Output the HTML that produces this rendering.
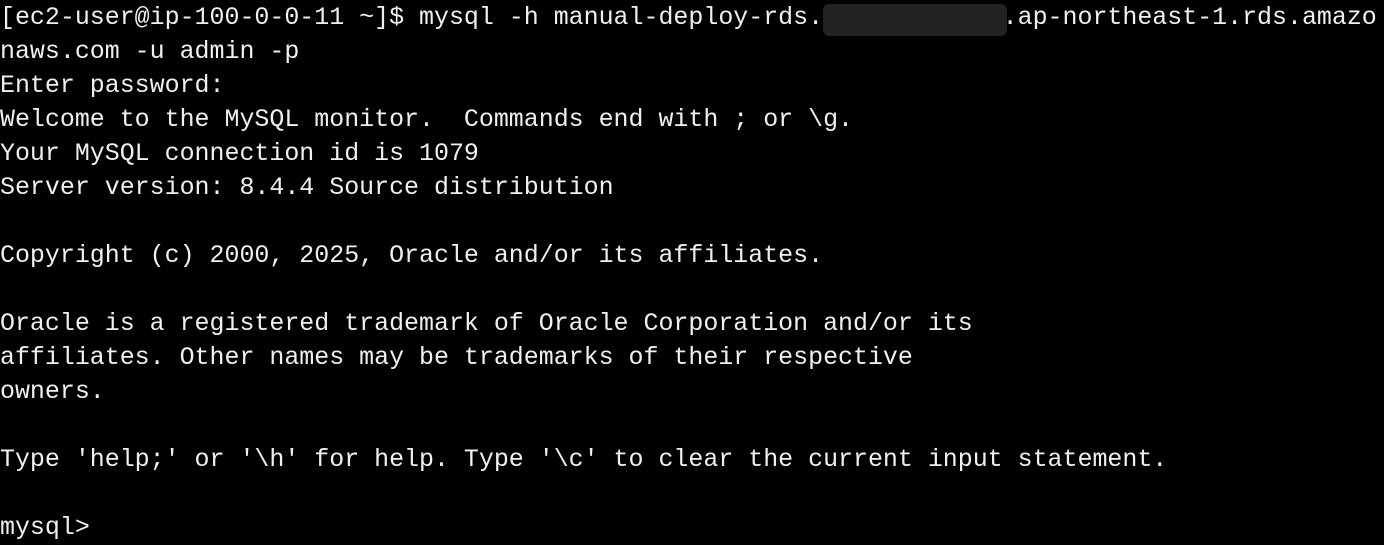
<!DOCTYPE html>
<html><head><style>
html,body{margin:0;padding:0;background:#000;}
body{width:1384px;height:543px;overflow:hidden;position:relative;}
pre{margin:0;position:absolute;left:0;top:1px;font-family:"Liberation Mono",monospace;font-size:24.95px;line-height:34px;color:#f0f0f0;white-space:pre;}
.r{position:absolute;left:823px;top:4px;width:184px;height:32px;background:#222;border-radius:6px;}
</style></head><body>
<pre>[ec2-user@ip-100-0-0-11 ~]$ mysql -h manual-deploy-rds.            .ap-northeast-1.rds.amazo
naws.com -u admin -p
Enter password:
Welcome to the MySQL monitor.  Commands end with ; or \g.
Your MySQL connection id is 1079
Server version: 8.4.4 Source distribution

Copyright (c) 2000, 2025, Oracle and/or its affiliates.

Oracle is a registered trademark of Oracle Corporation and/or its
affiliates. Other names may be trademarks of their respective
owners.

Type 'help;' or '\h' for help. Type '\c' to clear the current input statement.

mysql&gt; </pre>
<div class="r"></div>
</body></html>
